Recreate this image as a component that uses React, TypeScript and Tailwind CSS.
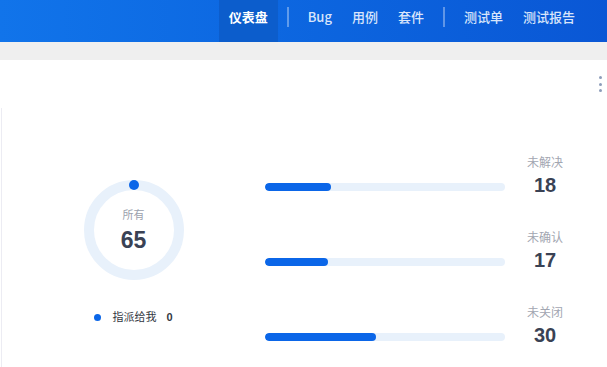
import React from 'react';

const font = { fontFamily: '"Liberation Sans", "Noto Sans CJK SC", sans-serif' };
const navFont = { fontFamily: '"Noto Sans CJK SC", "Liberation Sans", sans-serif' };

interface Stat {
    label: string;
    value: number;
}

const stats: Stat[] = [
    { label: '未解决', value: 18 },
    { label: '未确认', value: 17 },
    { label: '未关闭', value: 30 },
];

const total = 65;

function Divider() {
    return <div className="self-center w-[2px] h-[20px] bg-white/35 ml-[9px] mr-[9px] mb-[8px]"></div>;
}

function NavItem({ label, active }: { label: string; active?: boolean }) {
    return (
        <div
            className={`h-full flex items-center px-[10px] pb-[8px] text-[13px] ${
                active ? 'bg-[#0c5dcc] text-white font-bold' : 'text-[#d8e5fb] font-medium'
            }`}
        >
            {label}
        </div>
    );
}

function Donut() {
    return (
        <div className="relative w-[100px] h-[100px]">
            <svg width="100" height="100" viewBox="0 0 100 100" className="absolute inset-0">
                <circle cx="50" cy="50" r="45" fill="none" stroke="#e8f1fb" strokeWidth="10" />
                <circle cx="50" cy="5" r="5" fill="#0b66e8" />
            </svg>
            <div className="absolute inset-0 flex flex-col items-center justify-center pt-[2px]">
                <div className="text-[11px] leading-[14px] text-[#9ba1ad]">所有</div>
                <div className="text-[23px] leading-[28px] font-bold text-[#3a4254] mt-[4px]">{total}</div>
            </div>
        </div>
    );
}

export default function App() {
    return (
        <div className="w-[607px] h-[367px] overflow-hidden bg-white" style={font}>
            <header
                className="h-[42px] flex justify-end pr-[22px] bg-gradient-to-r from-[#1174ea] to-[#0a57d5]"
                style={navFont}
            >
                <NavItem label="仪表盘" active />
                <Divider />
                <NavItem label="Bug" />
                <NavItem label="用例" />
                <NavItem label="套件" />
                <Divider />
                <NavItem label="测试单" />
                <NavItem label="测试报告" />
            </header>
            <div className="h-[18px] bg-[#efefef]"></div>

            <div className="relative">
                <div className="absolute right-[5px] top-[16px] flex flex-col gap-[3.5px]">
                    <span className="w-[3px] h-[3px] rounded-full bg-[#8d9dba]"></span>
                    <span className="w-[3px] h-[3px] rounded-full bg-[#8d9dba]"></span>
                    <span className="w-[3px] h-[3px] rounded-full bg-[#8d9dba]"></span>
                </div>

                <div className="pt-[48px] flex">
                    <div className="ml-[1px] w-[264px] h-[260px] border-l border-[#ececf3] flex flex-col items-center pt-[72px]">
                        <Donut />
                        <div className="mt-[30px] flex items-center text-[11px] leading-[14px] text-[#333842]">
                            <span className="w-[7px] h-[7px] rounded-full bg-[#0b66e8] mr-[11px]"></span>
                            <span>指派给我</span>
                            <span className="ml-[10px] font-bold">0</span>
                        </div>
                    </div>

                    <div className="flex flex-col gap-[33px] pt-[47px]">
                        {stats.map((s) => (
                            <div key={s.label} className="flex items-end">
                                <div className="w-[240px] h-[8px] mb-[6px] rounded-full bg-[#e8f1fb] overflow-hidden">
                                    <div
                                        className="h-full rounded-full bg-[#0b66e8]"
                                        style={{ width: `${(s.value / total) * 100}%` }}
                                    ></div>
                                </div>
                                <div className="w-[80px] flex flex-col items-center">
                                    <div className="text-[12px] leading-[16px] text-[#a2a6b1]">{s.label}</div>
                                    <div className="text-[20px] leading-[24px] font-bold text-[#3a4254] mt-[2px]">{s.value}</div>
                                </div>
                            </div>
                        ))}
                    </div>
                </div>
            </div>
        </div>
    );
}
